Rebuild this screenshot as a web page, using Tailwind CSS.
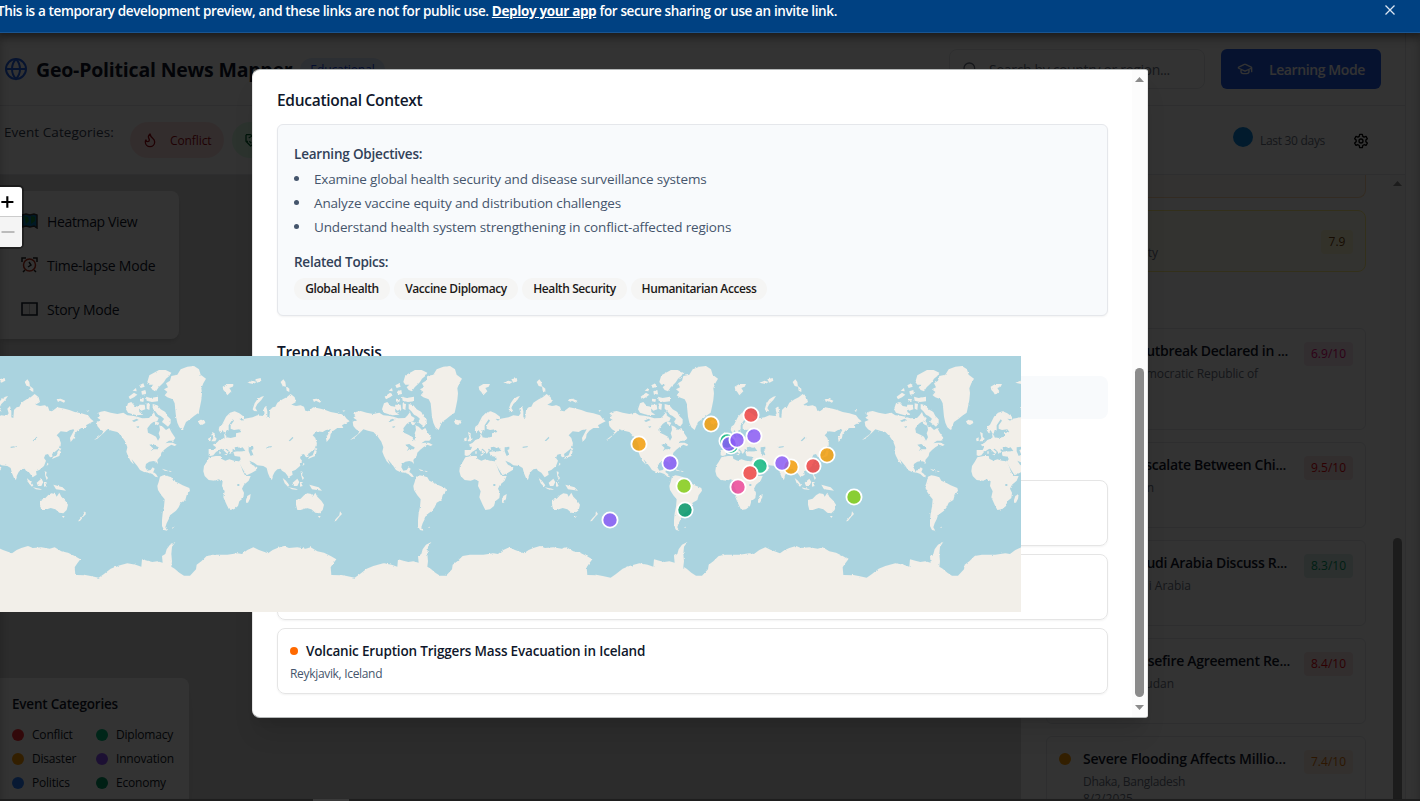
<!DOCTYPE html>
<html lang="en">
<head>
<meta charset="utf-8">
<title>Geo-Political News Mapper</title>
<script src="https://cdn.jsdelivr.net/npm/@tailwindcss/browser@4"></script>
</head>
<body class="w-[1420px] h-[801px] overflow-hidden bg-white font-['Open_Sans','Noto_Sans',sans-serif] text-sm text-slate-900">
<div class="relative flex flex-col h-[801px] w-[1420px] overflow-hidden">

  <!-- Preview banner -->
  <div class="relative z-20 flex h-[33px] shrink-0 items-start justify-between border-b border-[#1a5591] bg-[#004182] pr-[25px] shadow-[0_2px_6px_rgba(0,0,0,0.3)]">
    <p class="-ml-[3px] pt-px text-[13.5px] leading-5 font-semibold tracking-[-0.37px] whitespace-nowrap text-white">This is a temporary development preview, and these links are not for public use. <span class="font-bold underline">Deploy your app</span> for secure sharing or use an invite link.</p>
    <svg class="mt-[5px] size-[10px]" viewBox="0 0 10 10" fill="none" stroke="#dbe6f2" stroke-width="1.3"><path d="M.5 .5l9 9M9.5 .5l-9 9"/></svg>
  </div>

  <!-- Application -->
  <div class="flex w-[1406px] grow flex-col border-r border-gray-200 min-h-0">
    <header class="flex h-[73px] shrink-0 items-center border-b border-gray-200 pl-1 pr-6">
      <svg class="size-6 shrink-0" viewBox="0 0 24 24" fill="none" stroke="#2563eb" stroke-width="2"><circle cx="12" cy="12" r="10"/><path d="M12 2a14.5 14.5 0 0 0 0 20 14.5 14.5 0 0 0 0-20M2 12h20"/></svg>
      <h1 class="mt-[2px] ml-2 w-[257px] text-[19.5px] font-bold tracking-[-0.2px] whitespace-nowrap">Geo-Political News Mapper</h1>
      <span class="mt-[2px] ml-[7px] flex h-6 w-[85px] items-center justify-center rounded-full bg-blue-100 text-xs font-medium tracking-[-0.1px] text-blue-700">Educational</span>
      <div class="ml-auto flex h-10 w-64 items-center rounded-lg border border-gray-200 pl-3 text-gray-500">
        <svg class="size-4" viewBox="0 0 24 24" fill="none" stroke="currentColor" stroke-width="2"><circle cx="11" cy="11" r="8"/><path d="M21 21l-4.3-4.3"/></svg>
        <span class="mt-[2px] ml-[11px] tracking-[-0.35px]">Search by country or region...</span>
      </div>
      <div class="ml-4 flex h-10 w-40 items-center rounded-md bg-[#1f5be8] pl-4 font-semibold text-white">
        <svg class="size-4" viewBox="0 0 24 24" fill="none" stroke="currentColor" stroke-width="2" stroke-linecap="round" stroke-linejoin="round"><path d="M21.4 10.9a1 1 0 0 0 0-1.8L12.8 5.2a2 2 0 0 0-1.7 0L2.6 9.1a1 1 0 0 0 0 1.8l8.6 3.9a2 2 0 0 0 1.7 0zM22 10v6M6 12.5V16a6 3 0 0 0 12 0v-3.5"/></svg>
        <span class="mt-px ml-4 tracking-[-0.4px]">Learning Mode</span>
      </div>
    </header>

    <div class="flex h-[69px] shrink-0 border-b border-gray-200 pl-1 pr-[36px]">
      <span class="mt-[17px] w-[126px] text-[13.5px] font-medium tracking-[0.06px] text-gray-700">Event Categories:</span>
      <span class="mt-4 flex h-9 w-[94px] items-center rounded-full bg-red-100 pl-3 text-xs font-medium text-red-800">
        <svg class="size-4" viewBox="0 0 24 24" fill="none" stroke="currentColor" stroke-width="2" stroke-linecap="round" stroke-linejoin="round"><path d="M8.5 14.5A2.5 2.500 0 0 0 11 12c0-1.380-.5-2-1-3-1.070-2.140-.22-4.050 2-6 .5 2.500 2 4.900 4 6.500 2 1.600 3 3.500 3 5.500a7 7 0 1 1-14 0c0-1.150.43-2.290 1-3a2.500 2.500 0 0 0 2.500 2.500z"/></svg>
        <span class="mt-[2px] ml-3 tracking-[-0.1px]">Conflict</span>
      </span>
      <span class="mt-4 ml-2 flex h-9 w-[110px] items-center rounded-full bg-green-100 pl-3 text-xs font-medium text-green-800">
        <svg class="size-4" viewBox="0 0 24 24" fill="none" stroke="currentColor" stroke-width="2" stroke-linejoin="round"><path d="M3 4h7l2 2 2-2h7M3 4v10l7 7 3-2 6-5V4M7 9l5-3 4 5 3 3M8 14l3 3M3 14h3"/></svg>
        <span class="ml-[11px]">Diplomacy</span>
      </span>
      <span class="mt-[21px] ml-auto size-5 rounded-full bg-[#0a87e0]"></span>
      <span class="mt-[27px] ml-[7px] w-[65px] text-xs tracking-[-0.3px] whitespace-nowrap text-gray-500">Last 30 days</span>
      <svg class="mt-[27px] ml-7 size-4" viewBox="0 0 24 24" fill="none" stroke="#000" stroke-width="2" stroke-linejoin="round"><path d="M10 2h4l.7 3 1.900 1.100 2.900-1 2 3.500-2.200 2v2.500l2.200 2-2 3.500-2.900-1-1.900 1.100-.7 3.300h-4l-.7-3.300-1.900-1.100-2.900 1-2-3.500 2.200-2v-2.500l-2.200-2 2-3.500 2.900 1L9.300 5z"/><circle cx="12" cy="12" r="3"/></svg>
    </div>

    <main class="flex min-h-0 grow">
      <!-- Map column -->
      <section class="flex w-[1021px] shrink-0 flex-col justify-between bg-[#dddddd]">
        <div class="mt-4 flex h-[148px] w-[179px] flex-col justify-between rounded-r-lg bg-white py-[19px] pl-[21px] shadow-md">
          <div class="flex h-[22px] items-center gap-[9px]">
            <svg class="h-4 w-[17px]" viewBox="0 0 17 16"><path d="M1 2l4-1 4 1 4-1 3 1v13l-3-2-4 1-4-1-4 1z" fill="#087db8" stroke="#333" stroke-width="1.500"/><path d="M3 3l4 1 1 4-3 3zM10 3l4 1v4l-4 3z" fill="#168b3c"/></svg>
            <span class="mt-px tracking-[-0.35px]">Heatmap View</span>
          </div>
          <div class="flex h-[22px] items-center gap-[9px]">
            <svg class="h-4 w-[17px]" viewBox="0 0 17 16" fill="none" stroke="#222" stroke-width="1.500"><path d="M1 5V1h4M12 1h4v4M4 13l-2 2M13 13l2 2"/><circle cx="8.500" cy="8" r="6" stroke="#b32a12"/><path d="M8 5l2 3-3 2"/></svg>
            <span class="mt-px tracking-[-0.25px]">Time-lapse Mode</span>
          </div>
          <div class="flex h-[22px] items-center gap-[9px]">
            <svg class="h-4 w-[17px]" viewBox="0 0 17 16"><path d="M1 2h15v12H1z" fill="#eee" stroke="#15202d" stroke-width="1.600"/><path d="M8.500 3v10" stroke="#bbb"/></svg>
            <span class="mt-px tracking-[-0.25px]">Story Mode</span>
          </div>
        </div>
        <div class="h-[123px] w-[189px] overflow-hidden rounded-tr-lg bg-white pt-[17px] pl-3 shadow-lg">
          <h2 class="text-[13.5px] font-semibold tracking-[-0.2px]">Event Categories</h2>
          <div class="mt-[11px] grid grid-cols-[84px_1fr] gap-y-1 text-xs leading-5 tracking-[-0.2px] text-gray-900">
            <span class="flex items-center gap-2"><i class="size-3 rounded-full bg-red-500"></i>Conflict</span>
            <span class="flex items-center gap-2"><i class="size-3 rounded-full bg-emerald-500"></i>Diplomacy</span>
            <span class="flex items-center gap-2"><i class="size-3 rounded-full bg-amber-500"></i>Disaster</span>
            <span class="flex items-center gap-2"><i class="size-3 rounded-full bg-violet-500"></i>Innovation</span>
            <span class="flex items-center gap-2"><i class="size-3 rounded-full bg-blue-500"></i>Politics</span>
            <span class="flex items-center gap-2"><i class="size-3 rounded-full bg-emerald-600"></i>Economy</span>
          </div>
        </div>
      </section>

      <!-- Event list -->
      <aside class="flex w-[369px] shrink-0 flex-col overflow-hidden pr-6 pl-[25px]">
        <div class="h-[23px] shrink-0 rounded-b-lg border border-t-0 border-orange-200 bg-orange-50/60"></div>
        <div class="mt-3 flex h-[62px] shrink-0 items-center rounded-lg border border-yellow-200 bg-yellow-50/60">
          <span class="mt-[23px] w-[111px] text-right text-xs text-gray-500">Security</span>
          <span class="mt-[2px] ml-auto mr-3 flex h-6 w-8 items-center justify-center rounded bg-yellow-100/70 text-xs font-medium text-yellow-900">7.9</span>
        </div>
        <div class="mt-[56px] flex shrink-0 flex-col gap-3">
          <article class="flex h-[102px] rounded-md border border-gray-200 p-3">
            <div class="flex w-[245px] shrink-0 flex-col items-end">
              <h3 class="mr-[16px] font-semibold tracking-[-0.3px] whitespace-nowrap">Ebola Outbreak Declared in ...</h3>
              <p class="mt-[5px] mr-[46px] text-xs whitespace-nowrap text-gray-500 tracking-[-0.1px]">Kinshasa, Democratic Republic of</p>
            </div>
            <span class="mt-px flex h-6 w-[49px] shrink-0 items-center justify-center rounded bg-pink-700/10 text-xs font-medium text-pink-600">6.9/10</span>
          </article>
          <article class="flex h-[86px] rounded-md border border-gray-200 p-3">
            <div class="flex w-[245px] shrink-0 flex-col items-end">
              <h3 class="mr-[18px] font-semibold tracking-[-0.3px] whitespace-nowrap">Tensions Escalate Between Chi...</h3>
              <p class="mt-[5px] mr-[150px] text-xs text-gray-500">Taiwan</p>
            </div>
            <span class="mt-px flex h-6 w-[49px] shrink-0 items-center justify-center rounded bg-red-700/10 text-xs font-medium text-red-600">9.5/10</span>
          </article>
          <article class="flex h-[86px] rounded-md border border-gray-200 p-3">
            <div class="flex w-[245px] shrink-0 flex-col items-end">
              <h3 class="mr-[17px] font-semibold tracking-[-0.3px] whitespace-nowrap">Iran and Saudi Arabia Discuss R...</h3>
              <p class="mt-[5px] mr-[113px] text-xs text-gray-500">Riyadh, Saudi Arabia</p>
            </div>
            <span class="mt-px flex h-6 w-[49px] shrink-0 items-center justify-center rounded bg-emerald-600/15 text-xs font-medium text-emerald-600">8.3/10</span>
          </article>
          <article class="flex h-[86px] rounded-md border border-gray-200 p-3">
            <div class="flex w-[245px] shrink-0 flex-col items-end">
              <h3 class="mr-[14px] font-semibold tracking-[-0.3px] whitespace-nowrap">Sudan Ceasefire Agreement Re...</h3>
              <p class="mt-[5px] mr-[130px] text-xs text-gray-500">Khartoum, Sudan</p>
            </div>
            <span class="mt-px flex h-6 w-[49px] shrink-0 items-center justify-center rounded bg-red-700/10 text-xs font-medium text-red-600">8.4/10</span>
          </article>
          <article class="flex h-[86px] rounded-md border border-gray-200 p-3">
            <i class="mt-1 size-3 shrink-0 rounded-full bg-amber-500"></i>
            <div class="ml-3 w-[221px] shrink-0">
              <h3 class="font-semibold tracking-[-0.2px] whitespace-nowrap">Severe Flooding Affects Millio...</h3>
              <p class="mt-[5px] text-xs tracking-[-0.3px] text-gray-500">Dhaka, Bangladesh</p>
              <p class="mt-px text-xs text-gray-500">8/2/2025</p>
            </div>
            <span class="mt-px flex h-6 w-[49px] shrink-0 items-center justify-center rounded bg-amber-600/10 text-xs font-medium text-amber-600">7.4/10</span>
          </article>
        </div>
      </aside>
      <div class="flex w-[15px] flex-col items-center bg-[#fafafa]">
        <div class="mt-[6px] h-[5px] w-[9px] bg-[#8b8b8b] [clip-path:polygon(50%_0,100%_100%,0_100%)]"></div>
        <div class="mt-[352px] w-[9px] grow rounded-t-full bg-[#8b8b8b]"></div>
      </div>
    </main>
  </div>

  <!-- Backdrop -->
  <div class="absolute inset-0 top-[33px] z-10 bg-black/80 shadow-[inset_0_6px_8px_rgba(0,0,0,0.25)]"></div>
  <div class="absolute inset-x-0 bottom-0 z-10 flex h-[2px] bg-[#1e1e1e]"><i class="ml-[313px] w-9 bg-[#3a3a3a]"></i></div>

  <!-- Zoom control -->
  <div class="absolute top-[187px] left-0 z-20 flex h-[60px] w-[22px] flex-col overflow-hidden rounded-r-[3px] bg-white shadow-[0_0_0_2px_rgba(0,0,0,0.35)]">
    <svg class="h-[30px] w-[22px] border-b border-[#ccc]" viewBox="0 0 22 30" fill="none" stroke="#000" stroke-width="2.200"><path d="M1 15.500h12.500M7.200 9.500v12"/></svg>
    <svg class="h-[30px] w-[22px] bg-[#f4f4f4]" viewBox="0 0 22 30" fill="none" stroke="#bbb" stroke-width="2"><path d="M1.500 15h13"/></svg>
  </div>

  <!-- Event dialog -->
  <div class="absolute top-[69px] left-[252px] z-20 flex h-[649px] w-[896px] overflow-hidden rounded-l-lg rounded-r-[3px] border border-[#e5e5e5] border-y-[#b5b8b8] bg-white shadow-xl">
    <div class="w-[879px] pl-6 pr-6">
      <h2 class="mt-[18px] h-6 text-[15.5px] leading-6 font-semibold tracking-[-0.28px]">Educational Context</h2>
      <section class="mt-3 h-[192px] w-[831px] rounded-md border border-gray-200 bg-slate-50 px-4 pt-[19px] shadow-xs">
        <h3 class="text-[13.5px] leading-5 font-semibold tracking-[-0.2px] text-slate-700">Learning Objectives:</h3>
        <ul class="mt-[5px] flex list-none flex-col gap-1 text-[13.500px] leading-5 tracking-[-0.155px] text-slate-600">
          <li class="flex items-center"><i class="mb-[2px] mr-[15px] size-[5px] rounded-full bg-slate-600"></i>Examine global health security and disease surveillance systems</li>
          <li class="flex items-center"><i class="mb-[2px] mr-[15px] size-[5px] rounded-full bg-slate-600"></i>Analyze vaccine equity and distribution challenges</li>
          <li class="flex items-center"><i class="mb-[2px] mr-[15px] size-[5px] rounded-full bg-slate-600"></i>Understand health system strengthening in conflict-affected regions</li>
        </ul>
        <h3 class="mt-[15px] text-[13.5px] leading-5 font-semibold tracking-[-0.25px] text-slate-700">Related Topics:</h3>
        <div class="mt-[6px] flex gap-1 text-xs font-semibold tracking-[-0.4px] whitespace-nowrap text-stone-900">
          <span class="flex h-[22px] w-[96px] items-center justify-center rounded-full bg-stone-100">Global Health</span>
          <span class="flex h-[22px] w-[124px] items-center justify-center rounded-full bg-stone-100">Vaccine Diplomacy</span>
          <span class="flex h-[22px] w-[105px] items-center justify-center rounded-full bg-stone-100">Health Security</span>
          <span class="flex h-[22px] w-[136px] items-center justify-center rounded-full bg-stone-100">Humanitarian Access</span>
        </div>
      </section>
      <h2 class="mt-6 h-6 text-[15.5px] leading-6 font-semibold tracking-[-0.33px]">Trend Analysis</h2>
      <div class="mt-3 h-[43px] w-[831px] rounded-lg bg-slate-50"></div>
      <div class="mt-[61px] flex w-[831px] flex-col gap-2">
        <div class="h-[66px] rounded-lg border border-[#e5e5e5] shadow-xs"></div>
        <div class="h-[66px] rounded-lg border border-[#e5e5e5] shadow-xs"></div>
        <div class="h-[66px] rounded-lg border border-[#e5e5e5] px-3 pt-3 shadow-xs">
          <h4 class="flex items-center gap-2 text-[13.5px] leading-5 font-semibold tracking-[-0.17px]"><i class="size-2 rounded-full bg-orange-500"></i>Volcanic Eruption Triggers Mass Evacuation in Iceland</h4>
          <p class="mt-[5px] text-xs tracking-[-0.32px] text-slate-600">Reykjavik, Iceland</p>
        </div>
      </div>
    </div>
    <div class="flex w-[15px] shrink-0 flex-col items-center bg-[#fcfcfc]">
      <div class="mt-[7px] h-[5px] w-[9px] bg-[#8b8b8b] [clip-path:polygon(50%_0,100%_100%,0_100%)]"></div>
      <div class="mt-[286px] h-[329px] w-[9px] rounded-full bg-[#8b8b8b]"></div>
      <div class="mt-[8px] h-[5px] w-[9px] bg-[#8b8b8b] [clip-path:polygon(0_0,100%_0,50%_100%)]"></div>
    </div>
  </div>

  <!-- World map tiles and event pins -->
  <svg class="absolute top-[356px] left-0 z-30 h-64 w-[1021px]" viewBox="0 356 1021 256">
    <defs>
      <filter id="coast" x="0" y="0" width="100%" height="100%"><feTurbulence type="fractalNoise" baseFrequency="0.35" numOctaves="2" seed="4"/><feDisplacementMap in="SourceGraphic" scale="2.200" xChannelSelector="R" yChannelSelector="G"/></filter>
      <g id="world" fill="#f2efe9">
        <path d="M38 215L50 210 40 203 48 197 40 190 50 185 62 183 80 188 100 192 118 188 130 196 145 197 160 200 175 205 195 204 203 196 210 186 214 198 224 204 220 214 208 216 200 222 190 235 192 248 205 254 216 260 222 272 228 262 224 250 228 240 226 226 236 230 246 240 256 234 262 246 270 258 274 264 268 272 255 272 244 280 254 278 266 278 278 284 272 288 262 284 250 292 240 300 232 308 230 318 220 330 222 342 216 335 208 333 196 335 186 342 184 352 190 362 200 360 206 352 212 356 208 366 216 372 222 382 214 380 205 372 195 368 180 366 168 360 160 348 150 336 143 328 150 344 140 334 132 318 127 305 130 292 124 275 112 258 100 246 84 242 70 238 62 246 40 266 30 270 54 252 58 244 48 238 40 228z"/>
        <path d="M228 380L238 376 250 378 262 382 268 392 285 400 296 406 316 414 318 422 308 436 304 450 290 458 284 472 276 482 266 490 258 496 254 508 248 520 244 532 250 542 240 540 234 528 234 510 236 490 240 470 242 448 232 436 222 420 220 408 224 396z"/>
        <path d="M240 118L252 112 246 100 258 92 262 78 280 74 290 58 310 50 330 48 345 58 350 74 366 86 358 100 352 115 354 130 352 150 348 170 344 188 330 198 318 208 306 216 300 230 296 240 286 232 280 218 276 200 274 180 272 160 266 148 250 142 242 136 250 126z"/>
        <path d="M190 96L196 76 210 68 225 60 245 60 262 68 256 78 246 86 240 96 232 104 224 112 216 124 206 120 200 112 208 104 196 104z"/>
        <path d="M126 178L132 160 142 156 152 168 165 170 166 186 178 194 158 196 144 192 132 188zM206 162L220 166 230 178 244 186 250 198 260 208 260 220 252 230 242 222 234 216 240 206 230 198 222 194 214 184 206 176zM186 140L200 144 222 140 222 154 204 156 188 152zM134 140L150 128 160 134 150 142 138 148zM172 124L184 120 186 132 174 134zM166 106L178 100 182 110 170 114zM168 146L180 148 178 156 168 154zM166 164L182 164 184 178 172 182 164 174zM188 160L198 162 196 180 188 176zM146 122L156 114 158 124zM212 214L226 218 222 226 214 222z"/>
        <path d="M342 214L350 209 362 212 364 219 354 225 346 222zM416 110L430 102 450 102 446 110 436 114 442 124 430 136 424 126 418 120zM490 98L506 92 518 96 508 102zM514 88L530 84 532 92 520 98zM590 96L598 88 604 96 606 110 596 108zM606 108L616 116 616 126 608 122zM506 178L512 160 520 148 532 140 540 138 532 150 520 162 514 174 520 184 510 183zM686 148L698 146 712 152 708 158 696 152 690 156zM776 180L784 182 778 185z"/>
        <path d="M374 316L374 300 392 300 396 292 386 284 398 278 406 270 416 266 422 262 420 252 427 254 427 262 440 264 456 260 456 250 472 246 466 238 450 240 440 236 440 226 450 212 446 208 434 226 434 240 426 252 420 248 416 240 410 250 404 240 406 230 414 224 426 200 438 188 452 184 466 190 480 200 480 208 466 206 474 212 482 206 506 202 520 196 536 198 542 190 538 176 546 168 550 184 550 202 556 204 558 180 566 172 574 170 580 158 596 148 608 142 620 132 632 142 636 156 622 164 636 168 650 166 660 170 664 182 672 184 688 172 710 176 724 180 740 186 760 190 780 196 788 206 797 214 785 220 774 226 778 234 760 234 748 242 740 252 738 264 728 276 726 264 740 238 726 240 716 246 698 244 686 256 694 264 698 280 692 296 680 306 672 312 674 320 666 322 660 312 652 314 648 324 654 332 648 348 634 360 624 364 626 374 614 382 604 368 594 362 590 356 580 358 572 366 566 378 566 384 558 384 552 370 548 354 538 348 520 346 510 338 496 332 504 344 520 352 518 360 504 368 488 376 480 364 472 350 464 336 470 328 468 320 452 318 448 306 460 304 476 304 478 298 464 292 456 302 446 296 446 304 440 312 436 304 428 296 424 298 434 306 430 312 418 300 412 296 406 300 396 306 388 316 380 318z"/>
        <path d="M376 322L395 318 410 318 412 326 424 332 436 328 450 332 464 334 470 346 476 362 484 378 500 378 494 392 480 404 474 416 480 428 478 444 466 454 462 468 450 478 436 480 428 464 418 442 422 424 414 408 416 394 404 388 392 392 374 390 362 378 358 364 360 348 368 336z"/>
        <path d="M486 450L490 438 500 432 498 446 492 458 486 458zM384 246L392 250 392 260 398 266 394 274 382 274 388 264zM372 266L380 262 380 272 374 274zM420 312L430 312 428 316zM406 304L410 304 410 311 406 311zM690 292L700 296 696 302zM692 300L698 304 694 318 684 322 672 327 676 320 686 316zM694 266L698 280 698 290 694 284zM658 338L662 342 656 348zM560 380L566 386 562 390z"/>
        <path d="M596 384L606 392 616 406 612 410 602 400zM614 412L636 416 642 420 624 418zM626 398L640 386 646 396 640 408 630 408zM648 396L658 396 652 400 656 408 648 410zM650 364L656 366 654 376 660 384 656 390 652 378zM676 404L690 408 704 412 714 422 700 420 684 418z"/>
        <path d="M636 464L636 450 650 446 660 436 670 430 682 432 686 440 694 428 700 440 712 452 720 464 716 480 706 490 694 488 682 478 668 474 650 480 640 480zM702 498L710 498 706 504zM768 484L774 492 766 500 756 513 750 514 758 504 766 496zM234 356L246 360 254 364 242 362zM254 362L264 364 258 366zM264 532L270 530 268 534z"/>
        <path d="M0 674L20 678 44 683 60 672 80 656 100 648 130 640 155 644 172 650 174 628 190 632 205 636 220 634 236 638 234 618 244 612 248 598 258 584 274 576 264 590 262 612 264 634 262 650 272 656 286 668 300 677 318 677 336 658 338 644 352 634 368 618 390 614 430 614 460 610 474 612 490 600 508 592 525 600 552 610 566 600 580 594 600 588 615 594 640 592 665 596 680 592 700 604 720 608 740 618 757 628 748 640 740 652 742 675 772 676V800H0z"/>
        <g fill="#aad3df"><path d="M452 292L462 290 468 295 476 292 484 303 466 304 454 303zM494 292L508 290 508 298 502 300 508 314 500 318 494 304zM548 290L564 288 562 292 548 294zM614 272L626 260 628 264 618 274zM196 284L208 282 216 288 224 292 222 298 208 298 200 304 206 294zM144 212L158 206 164 210 150 216zM156 230L166 228 162 234zM460 402L466 402 466 408 460 408zM424 256L428 240 432 240 430 258z"/></g>
      </g>
    </defs>
    <path fill="#aad3df" d="M0 356h1021v256H0z"/>
    <g filter="url(#coast)">
      <use href="#world" transform="translate(-172 350) scale(.33333)"/>
      <use href="#world" transform="translate(84 350) scale(.33333)"/>
      <use href="#world" transform="translate(340 350) scale(.33333)"/>
      <use href="#world" transform="translate(596 350) scale(.33333)"/>
      <use href="#world" transform="translate(852 350) scale(.33333)"/>
    </g>
    <g stroke="#fff" stroke-width="1.800" fill-opacity=".85">
      <circle cx="639" cy="444" r="7.600" fill="#f59e0b"/>
      <circle cx="610" cy="520" r="7.600" fill="#8b5cf6"/>
      <circle cx="670" cy="463" r="7.600" fill="#8b5cf6"/>
      <circle cx="684" cy="486" r="7.600" fill="#84cc16"/>
      <circle cx="685" cy="510" r="7.600" fill="#059669"/>
      <circle cx="711" cy="424" r="7.600" fill="#f59e0b"/>
      <circle cx="751" cy="415" r="7.600" fill="#ef4444"/>
      <circle cx="731" cy="446" r="7.600" fill="#10b981"/>
      <circle cx="727" cy="441" r="7.600" fill="#10b981"/>
      <circle cx="729" cy="444" r="7.600" fill="#8b5cf6"/>
      <circle cx="737" cy="440" r="7.600" fill="#8b5cf6"/>
      <circle cx="754" cy="436" r="7.600" fill="#8b5cf6"/>
      <circle cx="760" cy="466" r="7.600" fill="#10b981"/>
      <circle cx="750" cy="473" r="7.600" fill="#ef4444"/>
      <circle cx="738" cy="487" r="7.600" fill="#ec4899"/>
      <circle cx="791" cy="467" r="7.600" fill="#f59e0b"/>
      <circle cx="782" cy="463" r="7.600" fill="#8b5cf6"/>
      <circle cx="813" cy="466" r="7.600" fill="#ef4444"/>
      <circle cx="827" cy="455" r="7.600" fill="#f59e0b"/>
      <circle cx="854" cy="497" r="7.600" fill="#84cc16"/>
    </g>
  </svg>
</div>
</body>
</html>
